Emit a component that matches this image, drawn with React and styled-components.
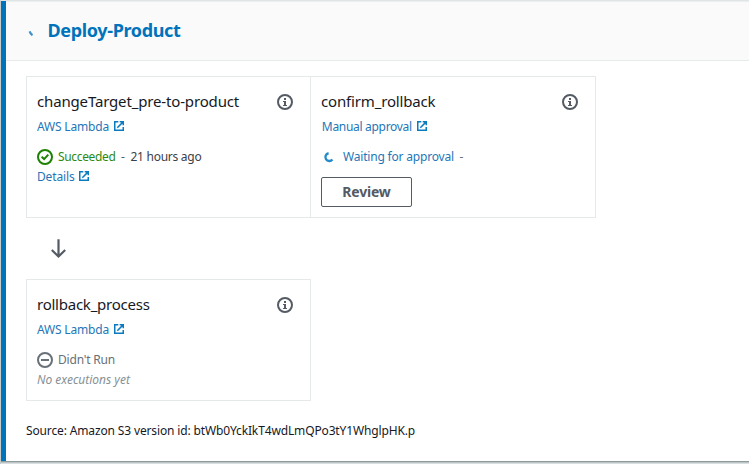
import React from "react";
import styled, { createGlobalStyle } from "styled-components";

const GlobalStyle = createGlobalStyle`
  * { box-sizing: border-box; }
  body {
    margin: 0;
    background: #fff;
    font-family: "Noto Sans", "Open Sans", sans-serif;
    font-size: 12px;
    line-height: 17px;
    color: #16191f;
  }
  svg { display: block; flex: none; }
`;

const Stage = styled.section`
  width: 749px;
  height: 464px;
  overflow: hidden;
  display: flex;
  flex-direction: column;
  border-top: 1px solid #dfe5e4;
  border-left: 1px solid #c3cbcb;
`;

const StageBody = styled.div`
  flex: 1;
  border-left: 5px solid #0073bb;
`;

const BottomEdge = styled.div`
  height: 3px;
  border-top: 1px solid #8f9b9b;
  border-bottom: 1px solid #d9dfe1;
  background: #bcc4c6;
`;

const Header = styled.header`
  height: 60px;
  display: flex;
  align-items: flex-start;
  padding: 17px 0 0 20px;
  background: #fafafa;
  border-top: 1px solid #eceff0;
  border-bottom: 1px solid #e6eaea;
`;

const StageTitle = styled.h2`
  margin: -1px 0 0 13.5px;
  font-size: 18px;
  line-height: 24px;
  font-weight: 700;
  letter-spacing: -0.35px;
  color: #0073bb;
`;

const HeaderSpinner = styled.svg`
  margin-top: 11px;
`;

const Content = styled.div`
  padding: 15px 0 0 20px;
`;

const Row = styled.div`
  display: flex;
`;

const Card = styled.article`
  width: ${(p) => p.$width}px;
  height: ${(p) => p.$height}px;
  padding: 14px 17px 0 10px;
  border: 1px solid #e6e9ea;
  & + & { border-left: 0; }
`;

const CardHead = styled.div`
  display: flex;
  justify-content: space-between;
  height: 20px;
`;

const CardTitle = styled.h3`
  margin: 0;
  font-size: 15px;
  line-height: 20px;
  font-weight: 400;
  white-space: nowrap;
  letter-spacing: ${(p) => p.$track}px;
`;

const InfoIcon = styled.svg`
  margin-top: 3px;
`;

const Line = styled.div`
  display: flex;
  align-items: flex-start;
  height: 17px;
  margin-top: ${(p) => p.$gap}px;
  padding-left: ${(p) => p.$indent || 0}px;
  white-space: nowrap;
`;

const Text = styled.span`
  color: ${(p) => p.$color};
  font-style: ${(p) => (p.$italic ? "italic" : "normal")};
  letter-spacing: ${(p) => p.$track || 0}px;
  margin-left: ${(p) => p.$left || 0}px;
`;

const Link = styled.a`
  display: flex;
  color: #1f76b8;
  letter-spacing: ${(p) => p.$track}px;
  svg { margin: 3px 0 0 5px; }
`;

const StatusIcon = styled.svg`
  margin-top: 1px;
`;

const Button = styled.button`
  display: block;
  width: 91px;
  height: 30px;
  margin: 12px 0 0;
  padding: 0 0 1px;
  border: 1px solid #545b64;
  border-radius: 2px;
  background: #fff;
  color: #545b64;
  font: 700 14px/19px "Noto Sans", "Open Sans", sans-serif;
  letter-spacing: -0.2px;
`;

const Transition = styled.div`
  height: 61px;
  padding: 21px 0 0 24px;
`;

const Source = styled.p`
  margin: 21px 0 0;
  letter-spacing: -0.139px;
  white-space: nowrap;
`;

const External = () => (
  <svg width="10" height="10" viewBox="0 0 10 10" fill="none" stroke="#0a7bbf" strokeWidth="1.5">
    <path d="M4.3 .75H.75V9.25H9.25V6" />
    <path d="M5.7 .75H9.25V4.3M9.1 .9L3.3 6.7" />
  </svg>
);

const Info = () => (
  <InfoIcon width="16" height="16" viewBox="0 0 16 16">
    <circle cx="8" cy="8" r="7" fill="none" stroke="#545b64" strokeWidth="2" />
    <path d="M7 4h2v2H7zM6 7h3v4h1v1H6v-1h1V8H6z" fill="#545b64" />
  </InfoIcon>
);

const Heading = ({ children, track }) => (
  <CardHead>
    <CardTitle $track={track}>{children}</CardTitle>
    <Info />
  </CardHead>
);

const ActionLink = ({ children, track }) => (
  <Link $track={track}>
    {children}
    <External />
  </Link>
);

export default function App() {
  return (
    <>
      <GlobalStyle />
      <Stage>
        <StageBody>
          <Header>
            <HeaderSpinner width="8" height="8" viewBox="0 0 8 8" fill="none">
              <path d="M3.6 1.4Q4.4 3.9 6.5 5.2" stroke="#3d93c8" strokeWidth="2.2" />
            </HeaderSpinner>
            <StageTitle>Deploy-Product</StageTitle>
          </Header>
          <Content>
            <Row>
              <Card $width={285} $height={142}>
                <Heading track={-0.155}>changeTarget_pre-to-product</Heading>
                <Line $gap={7}>
                  <ActionLink track={-0.18}>AWS Lambda</ActionLink>
                </Line>
                <Line $gap={13}>
                  <StatusIcon width="16" height="16" viewBox="0 0 16 16" fill="none" stroke="#1d8102" strokeWidth="2">
                    <circle cx="8" cy="8" r="7" />
                    <path d="M4.6 7.8L7.1 10.1L11.3 5.6" />
                  </StatusIcon>
                  <Text $color="#2b8a12" $left={5} $track={-0.34}>Succeeded</Text>
                  <Text $color="#545b64" $left={5.5}>-</Text>
                  <Text $color="#3c4148" $left={5.5} $track={-0.26}>21 hours ago</Text>
                </Line>
                <Line $gap={3}>
                  <ActionLink track={-0.15}>Details</ActionLink>
                </Line>
              </Card>
              <Card $width={285} $height={142}>
                <Heading track={-0.16}>confirm_rollback</Heading>
                <Line $gap={7} $indent={0.8}>
                  <ActionLink track={-0.3}>Manual approval</ActionLink>
                </Line>
                <Line $gap={13}>
                  <StatusIcon width="16" height="16" viewBox="0 0 16 16" fill="none" stroke="#258bc9" strokeWidth="2.4">
                    <path d="M7.6 4.2A3.9 3.9 0 1 0 11.4 10.4" />
                  </StatusIcon>
                  <Text $color="#1f76b8" $left={6} $track={-0.19}>Waiting for approval</Text>
                  <Text $color="#687078" $left={5.5}>-</Text>
                </Line>
                <Button>Review</Button>
              </Card>
            </Row>
            <Transition>
              <svg width="17" height="20" viewBox="0 0 17 20" fill="none" stroke="#545b64" strokeWidth="2.2">
                <path d="M8.5 .3V18M1.8 11L8.5 17.5L15.2 11" />
              </svg>
            </Transition>
            <Card $width={285} $height={122}>
              <Heading track={-0.24}>rollback_process</Heading>
              <Line $gap={7}>
                <ActionLink track={-0.18}>AWS Lambda</ActionLink>
              </Line>
              <Line $gap={13}>
                <StatusIcon width="16" height="16" viewBox="0 0 16 16" fill="none" stroke="#687078" strokeWidth="2">
                  <circle cx="8" cy="8" r="7" />
                  <path d="M4 8H12" />
                </StatusIcon>
                <Text $color="#687078" $left={5} $track={-0.2}>Didn't Run</Text>
              </Line>
              <Line $gap={3}>
                <Text $color="#879196" $italic>No executions yet</Text>
              </Line>
            </Card>
            <Source>Source: Amazon S3 version id: btWb0YckIkT4wdLmQPo3tY1WhglpHK.p</Source>
          </Content>
        </StageBody>
        <BottomEdge />
      </Stage>
    </>
  );
}
